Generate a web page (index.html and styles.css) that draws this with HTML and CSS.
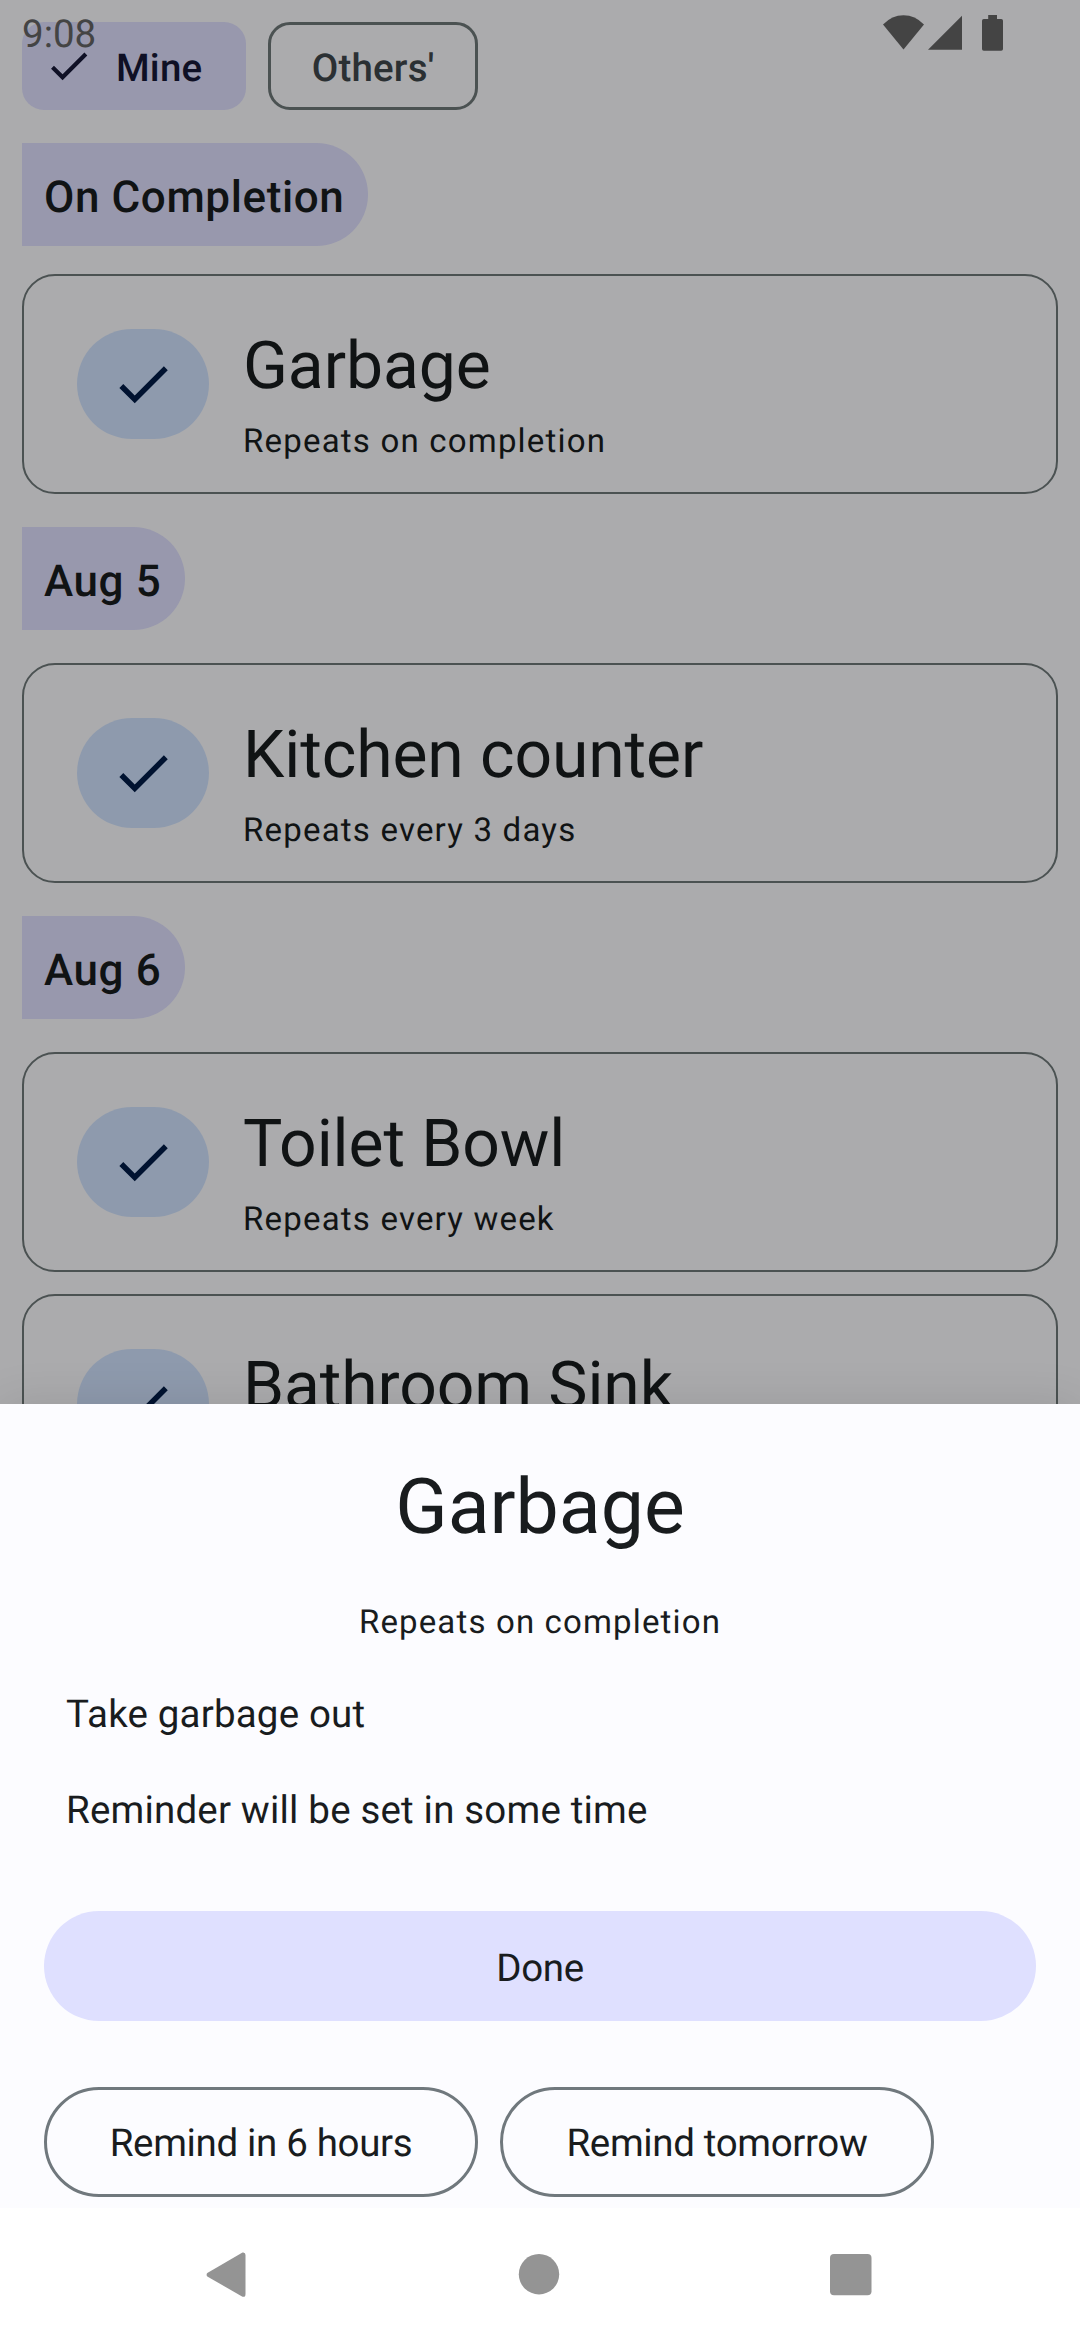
FILE: index.html
```html
<!DOCTYPE html>
<html lang="en">
<head>
<meta charset="utf-8">
<title>Chores</title>
<link rel="stylesheet" href="styles.css">
</head>
<body>
<svg class="defs" width="0" height="0" aria-hidden="true">
  <symbol id="check" viewBox="0 0 24 24"><path d="M9 16.17 4.83 12l-1.42 1.41L9 19 21 7l-1.41-1.41z"/></symbol>
</svg>
<div class="screen">
  <main class="app">
    <div class="filters">
      <button class="chip chip-on"><svg class="chip-check"><use href="#check"/></svg><span class="chip-label">Mine</span></button>
      <button class="chip chip-off"><span class="chip-label">Others'</span></button>
    </div>

    <h2 class="day day-first">On Completion</h2>
    <article class="card">
      <button class="tick"><svg class="tick-icon"><use href="#check"/></svg></button>
      <div class="card-text"><h3 class="card-title">Garbage</h3><p class="card-sub">Repeats on completion</p></div>
    </article>

    <h2 class="day">Aug 5</h2>
    <article class="card">
      <button class="tick"><svg class="tick-icon"><use href="#check"/></svg></button>
      <div class="card-text"><h3 class="card-title">Kitchen counter</h3><p class="card-sub">Repeats every 3 days</p></div>
    </article>

    <h2 class="day">Aug 6</h2>
    <article class="card">
      <button class="tick"><svg class="tick-icon"><use href="#check"/></svg></button>
      <div class="card-text"><h3 class="card-title">Toilet Bowl</h3><p class="card-sub">Repeats every week</p></div>
    </article>
    <article class="card card-next">
      <button class="tick"><svg class="tick-icon"><use href="#check"/></svg></button>
      <div class="card-text"><h3 class="card-title">Bathroom Sink</h3></div>
    </article>
  </main>

  <div class="scrim"></div>

  <header class="status">
    <span class="clock">9:08</span>
    <svg class="status-icons" width="122" height="38" viewBox="0 0 122 38">
      <path d="M0 9.500Q9 .3 20.500 .3T41 9.500L20.500 34.500z"/>
      <path d="M45 34.700 79 .7V34.700z"/>
      <path d="M105.200 0h8.800v4h4.200a1.800 1.800 0 0 1 1.800 1.800v28.200a1.800 1.800 0 0 1-1.800 1.800h-17.400a1.800 1.800 0 0 1-1.800-1.800V5.800a1.800 1.800 0 0 1 1.800-1.800h4.400z"/>
    </svg>
  </header>

  <div class="bottom">
    <section class="sheet">
      <h1 class="sheet-title">Garbage</h1>
      <p class="sheet-sub">Repeats on completion</p>
      <p class="note">Take garbage out</p>
      <p class="note note-reminder">Reminder will be set in some time</p>
      <button class="done">Done</button>
      <div class="actions">
        <button class="outlined">Remind in 6 hours</button>
        <button class="outlined">Remind tomorrow</button>
      </div>
    </section>
    <nav class="nav">
      <svg width="42" height="46" viewBox="0 0 42 46"><path d="M1.300 21 36.500 .5Q39.500 0 39.500 3V42Q39.500 45.500 36.500 44.700L1.300 24.500Q-.1 22.700 1.300 21z"/></svg>
      <svg width="42" height="42" viewBox="0 0 42 42"><circle cx="21" cy="20.200" r="20.200"/></svg>
      <svg width="42" height="42" viewBox="0 0 42 42"><rect width="41.500" height="41.200" rx="4"/></svg>
    </nav>
  </div>
</div>
</body>
</html>
```
FILE: styles.css
```css
* { box-sizing: border-box; margin: 0; padding: 0; }
body { font-family: Roboto, "Liberation Sans", sans-serif; color: #191c1e; background: #fff; text-rendering: geometricPrecision; }
button { font: inherit; color: inherit; background: none; border: 0; text-rendering: inherit; }
h1, h2, h3 { font-weight: 400; }
.defs { display: none; }
.screen { position: relative; width: 1080px; height: 2340px; overflow: hidden; background: #fcfcff; }

.app { display: flex; flex-direction: column; align-items: flex-start; height: 2340px; padding: 22px; overflow: hidden; }
.filters { display: flex; gap: 22px; }
.chip { display: flex; align-items: center; height: 88px; border-radius: 22px; font-size: 38.5px; font-weight: 500; letter-spacing: .2px; }
.chip-label { padding-top: 4px; }
.chip-on { width: 224px; padding-left: 22px; gap: 22.5px; background: #e0e0ff; color: #171937; }
.chip-check { width: 49.5px; height: 49.5px; fill: currentColor; }
.chip-off { width: 210px; justify-content: center; border: 3px solid #6f797a; color: #40484c; }

.day { flex: none; height: 103px; margin: 33px 0; padding: 21px 23.5px 0 22px; border-radius: 0 51.5px 51.5px 0; background: #e0e0ff; font-size: 44px; line-height: 66px; font-weight: 500; letter-spacing: .6px; }
.day-first { margin-bottom: 28px; }

.card { display: flex; flex: none; align-items: flex-start; gap: 34px; width: 100%; height: 220px; padding: 0 53px; border: 2px solid #6f797a; border-radius: 33px; }
.card-next { margin-top: 22px; }
.tick { display: flex; align-items: center; justify-content: center; width: 132px; height: 110px; margin-top: 53px; border-radius: 55px; background: #d2e4ff; }
.tick-icon { width: 66px; height: 66px; fill: #001b47; }
.card-text { padding-top: 47px; }
.card-title { font-size: 66px; line-height: 88px; letter-spacing: -.1px; }
.card-sub { margin-top: 9px; font-size: 33px; line-height: 44px; letter-spacing: 1.2px; }

.scrim { position: absolute; inset: 0; background: rgba(0, 0, 0, .32); }

.status { position: absolute; top: 0; left: 0; width: 1080px; height: 66px; display: flex; justify-content: space-between; padding: 11px 75px 0 22px; color: #444; }
.clock { padding-top: 1px; font-size: 38.5px; line-height: 46px; }
.status-icons { margin-top: 4px; fill: #444; }

.bottom { position: absolute; left: 0; bottom: 0; width: 1080px; height: 936px; display: flex; flex-direction: column; }
.sheet { height: 804px; padding: 54px 44px 0; background: #fcfcff; box-shadow: 0 0 44px rgba(0, 0, 0, .1); }
.sheet-title { font-size: 77px; line-height: 99px; text-align: center; }
.sheet-sub { margin-top: 44px; font-size: 33px; line-height: 44px; letter-spacing: 1.15px; text-align: center; }
.note { margin-top: 42px; padding-left: 22px; font-size: 38.5px; line-height: 55px; letter-spacing: .18px; }
.note-reminder { margin-top: 41px; }
.done { display: block; width: 100%; height: 110px; margin-top: 73px; padding-top: 4px; border-radius: 55px; background: #dfe0ff; font-size: 38.5px; letter-spacing: -.35px; }
.actions { display: flex; gap: 22px; margin-top: 66px; }
.outlined { width: 434px; height: 110px; padding-top: 3px; border: 3px solid #70787d; border-radius: 55px; font-size: 38.5px; letter-spacing: -.35px; }
.nav { position: relative; display: flex; justify-content: space-between; align-items: flex-start; height: 132px; padding: 44px 208px 0 206px; background: #fff; fill: #949494; }
.nav svg + svg { margin-top: 2px; }
```
